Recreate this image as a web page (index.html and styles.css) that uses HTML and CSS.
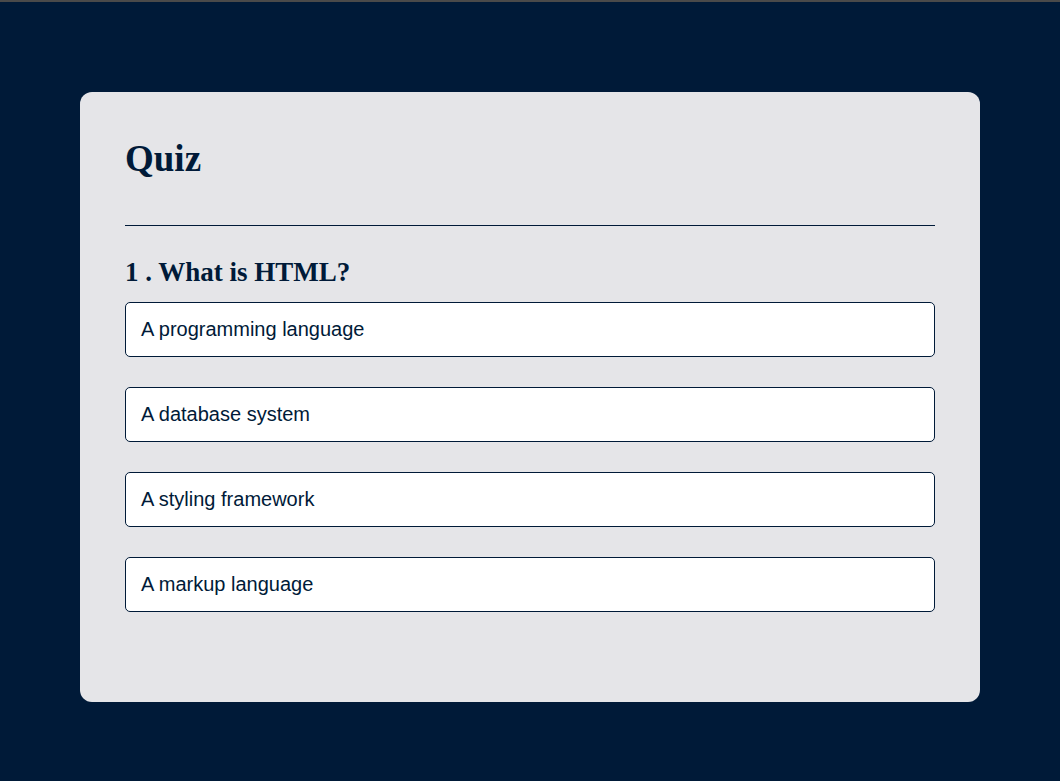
FILE: index.html
```html
<!DOCTYPE html>
<html>
<head>
<meta charset="utf-8">
<link rel="stylesheet" href="styles.css">
</head>
<body>
<div class="topbar"></div>
<main class="page">
  <section class="card">
    <h1 class="title">Quiz</h1>
    <hr class="divider">
    <h2 class="question">1 . What is HTML?</h2>
    <ul class="options">
      <li class="option">A programming language</li>
      <li class="option">A database system</li>
      <li class="option">A styling framework</li>
      <li class="option">A markup language</li>
    </ul>
  </section>
</main>
</body>
</html>
```
FILE: styles.css
```css
html, body {
  margin: 0;
  padding: 0;
}
body {
  background: #001a38;
  height: 781px;
  overflow: hidden;
  font-family: "Liberation Serif", "Times New Roman", serif;
  color: #001a38;
}
.topbar {
  height: 2px;
  background: #4a4a4a;
}
.page {
  padding-top: 90px;
}
.card {
  width: 900px;
  box-sizing: border-box;
  margin: 0 auto;
  background: #e5e5e8;
  border-radius: 12px;
  padding: 45px 45px 90px;
}
.title {
  margin: 0;
  font-size: 37px;
  font-weight: bold;
  line-height: 44px;
}
.divider {
  margin: 44px 0 0;
  border: none;
  border-top: 1px solid #001a38;
  height: 0;
}
.question {
  margin: 30px 0 0;
  font-size: 27px;
  font-weight: bold;
  line-height: 32px;
}
.options {
  list-style: none;
  margin: 14px 0 0;
  padding: 0;
  display: flex;
  flex-direction: column;
  gap: 30px;
}
.option {
  height: 55px;
  box-sizing: border-box;
  display: flex;
  align-items: center;
  padding: 0 15px;
  background: #ffffff;
  border: 1px solid #001a38;
  border-radius: 5px;
  font-family: "Liberation Sans", Arial, sans-serif;
  font-size: 20px;
  color: #001a38;
}
```
